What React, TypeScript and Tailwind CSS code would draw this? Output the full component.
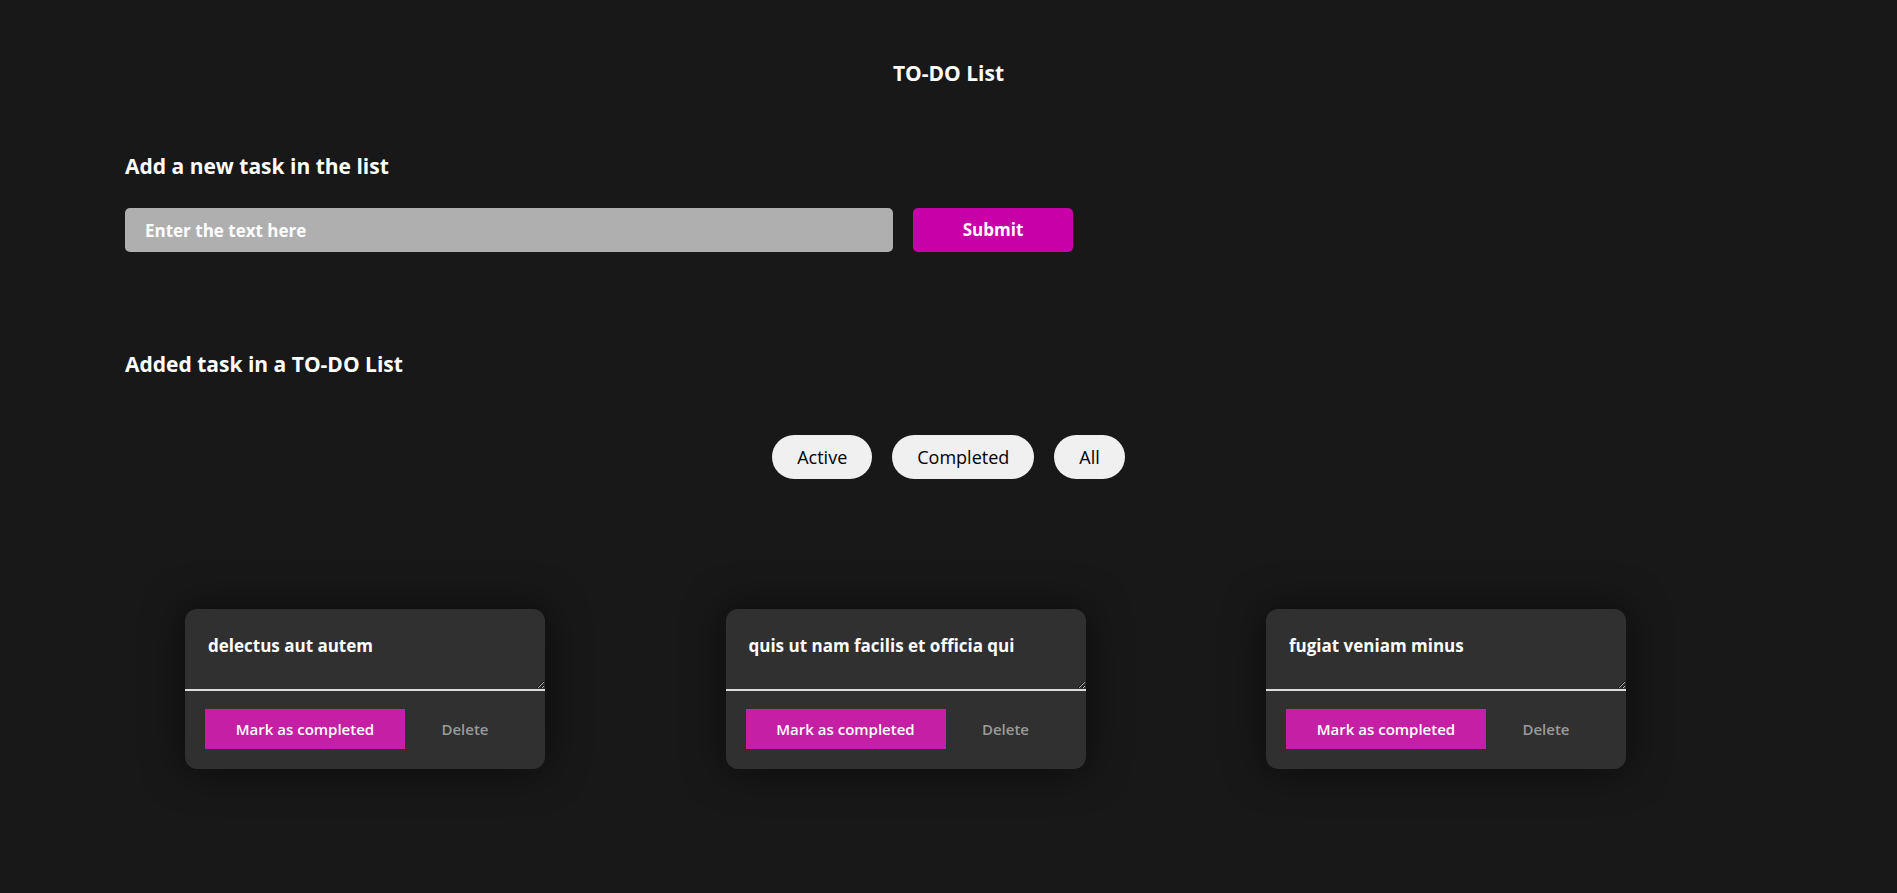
import { useState } from "react";

type Task = { id: number; title: string };

const tasks: Task[] = [
  { id: 1, title: "delectus aut autem" },
  { id: 2, title: "quis ut nam facilis et officia qui" },
  { id: 3, title: "fugiat veniam minus" },
];

const filters = ["Active", "Completed", "All"];

const TaskCard = ({ task }: { task: Task }) => {
  return (
    <div className="w-[360px] overflow-hidden rounded-xl bg-[#303030] shadow-[0_0_40px_rgba(0,0,0,0.55)]">
      <textarea
        defaultValue={task.title}
        className="block h-[82px] w-full border-b-2 border-[#dcdcdc] bg-transparent px-[23px] pt-[24px] text-[17px] font-bold text-white outline-none"
      />
      <div className="flex px-5 pt-[18px] pb-5">
        <button className="h-10 w-[200px] bg-[#c51fa6] text-[15px] font-semibold text-white">
          Mark as completed
        </button>
        <button className="h-10 flex-1 text-[15px] font-semibold text-[#9a9a9a]">
          Delete
        </button>
      </div>
    </div>
  );
};

const App = () => {
  const [text, setText] = useState("");

  return (
    <div className="min-h-screen bg-[#181818] pb-20 font-['Open_Sans',sans-serif] text-white">
      <h1 className="pt-[58px] text-center text-[21px] leading-[30px] font-bold">TO-DO List</h1>

      <div className="px-[125px]">
        {/* add task */}
        <h2 className="mt-[63px] text-[21px] leading-[30px] font-bold">Add a new task in the list</h2>
        <div className="mt-[27px] flex gap-5">
          <input
            value={text}
            onChange={(e) => setText(e.target.value)}
            placeholder="Enter the text here"
            className="h-11 w-[768px] rounded-[5px] bg-[#afafaf] px-5 text-[17px] font-bold text-white outline-none placeholder:text-white"
          />
          <button className="h-11 w-40 rounded-[5px] bg-[#c800a8] text-[17px] font-bold text-white">
            Submit
          </button>
        </div>

        {/* list */}
        <h2 className="mt-[97px] text-[21px] leading-[30px] font-bold">Added task in a TO-DO List</h2>
        <div className="mt-[56px] flex justify-center gap-5">
          {filters.map((f) => (
            <button
              key={f}
              className="h-11 rounded-full bg-[#f0f0f0] px-[25px] text-[18px] font-medium text-black"
            >
              {f}
            </button>
          ))}
        </div>
      </div>

      <div className="mt-[130px] flex gap-[180.5px] pl-[185px]">
        {tasks.map((t) => (
          <TaskCard key={t.id} task={t} />
        ))}
      </div>
    </div>
  );
};

export default App;
